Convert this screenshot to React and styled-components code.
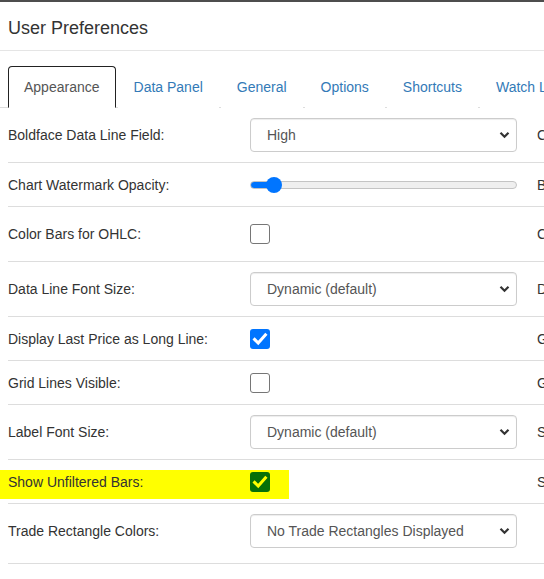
import styled, { createGlobalStyle } from 'styled-components';

const GlobalStyle = createGlobalStyle`
  html, body {
    margin: 0;
    padding: 0;
    background: #fff;
    overflow: hidden;
  }
  body {
    font-family: "Liberation Sans", Arial, sans-serif;
    font-size: 14px;
    line-height: 20px;
    color: #333;
  }
  * { box-sizing: border-box; }
`;

const tabs = ['Appearance', 'Data Panel', 'General', 'Options', 'Shortcuts', 'Watch List'];

const rows = [
  { label: 'Boldface Data Line Field:', kind: 'select', value: 'High', right: 'Crosshair Mode:', rightKind: 'select' },
  { label: 'Chart Watermark Opacity:', kind: 'slider', value: 6, right: 'Bar Spacing:', rightKind: 'check' },
  { label: 'Color Bars for OHLC:', kind: 'check', value: false, right: 'Chart Style:', rightKind: 'select' },
  { label: 'Data Line Font Size:', kind: 'select', value: 'Dynamic (default)', right: 'Default Chart Type:', rightKind: 'select' },
  { label: 'Display Last Price as Long Line:', kind: 'check', value: true, right: 'Gap Fill:', rightKind: 'check' },
  { label: 'Grid Lines Visible:', kind: 'check', value: false, right: 'Grid Line Color:', rightKind: 'check' },
  { label: 'Label Font Size:', kind: 'select', value: 'Dynamic (default)', right: 'Scale Type:', rightKind: 'select' },
  { label: 'Show Unfiltered Bars:', kind: 'check', value: true, marked: true, right: 'Show Volume:', rightKind: 'check' },
  { label: 'Trade Rectangle Colors:', kind: 'select', value: 'No Trade Rectangles Displayed', last: true },
];

const Page = styled.div`
  border-top: 2px solid #4d4d4d;
  width: 544px;
  overflow: hidden;
`;

const Header = styled.div`
  padding: 16px 8px 12px;
  border-bottom: 1px solid #e5e5e5;
`;

const Title = styled.h4`
  margin: 0;
  font-size: 18px;
  font-weight: normal;
  line-height: 20px;
  color: #333;
`;

const TabList = styled.ul`
  display: flex;
  list-style: none;
  margin: 15px 0 0;
  padding: 0 0 0 8px;
  border-bottom: 1px solid #ddd;
  white-space: nowrap;
`;

const Tab = styled.li`
  flex: none;
  margin: 0 2px -1px 0;
  padding: 10px 15px;
  line-height: 20px;
  border: 1px solid ${(p) => (p.$active ? '#222' : 'transparent')};
  border-bottom-color: transparent;
  border-radius: 4px 4px 0 0;
  background: #fff;
  color: ${(p) => (p.$active ? '#555' : '#337ab7')};
`;

const Form = styled.div`
  padding-left: 8px;
`;

const Row = styled.div`
  position: relative;
  display: grid;
  grid-template-columns: 242px 267px 280px 267px;
  grid-auto-rows: minmax(23px, auto);
  align-items: center;
  padding: 10px 0 ${(p) => (p.$last ? '15px' : '10px')};
  border-bottom: 1px solid #ddd;
`;

const Highlight = styled.span`
  position: absolute;
  left: -8px;
  top: 10px;
  width: 289px;
  height: 29px;
  background: #ffff00;
`;

const Label = styled.div`
  position: relative;
  white-space: nowrap;
  color: #333;
  padding-left: ${(p) => (p.$side ? '20px' : '0')};
`;

const Cell = styled.div`
  position: relative;
  display: flex;
  align-items: center;
`;

const SelectWrap = styled.div`
  position: relative;
  width: 267px;
  height: 34px;
`;

const Select = styled.select`
  -webkit-appearance: none;
  appearance: none;
  width: 100%;
  height: 100%;
  padding: 6px 30px 6px 16px;
  font-family: inherit;
  font-size: 14px;
  color: #555;
  background: #fff;
  border: 1px solid #ccc;
  border-radius: 4px;
  box-shadow: inset 0 1px 1px rgba(0, 0, 0, 0.075);
`;

const Chevron = styled.svg`
  position: absolute;
  right: 7px;
  top: 13px;
  pointer-events: none;
`;

const Range = styled.input`
  -webkit-appearance: none;
  appearance: none;
  width: 267px;
  height: 16px;
  margin: 0;
  background: transparent;

  &::-webkit-slider-runnable-track {
    height: 8px;
    border-radius: 4px;
    border: 1px solid #c4c4c4;
    background: linear-gradient(
      to right,
      #0075ff 0,
      #0075ff ${(p) => p.$pct}%,
      #efefef ${(p) => p.$pct}%,
      #efefef 100%
    );
  }
  &::-webkit-slider-thumb {
    -webkit-appearance: none;
    width: 16px;
    height: 16px;
    margin-top: -5px;
    border-radius: 50%;
    background: #0075ff;
    border: none;
  }
`;

const Box = styled.span`
  display: flex;
  align-items: center;
  justify-content: center;
  width: 20px;
  height: 20px;
  border-radius: 3px;
  border: ${(p) => (p.$checked ? 'none' : '1px solid #767676')};
  background: ${(p) => (p.$checked ? (p.$marked ? '#077007' : '#0075ff') : '#fff')};
`;

const CheckBox = ({ checked, marked }) => (
  <Box $checked={checked} $marked={marked}>
    {checked && (
      <svg width="20" height="20" viewBox="0 0 20 20">
        <path
          d="M4.6 10.4 L8.2 14 L15.4 5.8"
          fill="none"
          stroke={marked ? '#ffff00' : '#fff'}
          strokeWidth="3"
          strokeLinecap="square"
        />
      </svg>
    )}
  </Box>
);

const Control = ({ kind, value, marked }) => {
  if (kind === 'select')
    return (
      <SelectWrap>
        <Select defaultValue={value}>
          <option>{value}</option>
        </Select>
        <Chevron width="11" height="8" viewBox="0 0 11 8">
          <path d="M1.5 1.8 L5.5 5.8 L9.5 1.8" fill="none" stroke="#333" strokeWidth="2.2" />
        </Chevron>
      </SelectWrap>
    );
  if (kind === 'slider')
    return <Range type="range" min="0" max="100" defaultValue={value} $pct={value} />;
  if (kind === 'check') return <CheckBox checked={value} marked={marked} />;
  return null;
};

const App = () => (
  <>
    <GlobalStyle />
    <Page>
      <Header>
        <Title>User Preferences</Title>
      </Header>
      <TabList>
        {tabs.map((t, i) => (
          <Tab key={t} $active={i === 0}>{t}</Tab>
        ))}
      </TabList>
      <Form>
        {rows.map((r) => (
          <Row key={r.label} $last={r.last}>
            {r.marked && <Highlight />}
            <Label>{r.label}</Label>
            <Cell>
              <Control kind={r.kind} value={r.value} marked={r.marked} />
            </Cell>
            <Label $side>{r.right}</Label>
            <Cell>
              {r.rightKind && <Control kind={r.rightKind} value={r.rightKind === 'select' ? 'Default' : false} />}
            </Cell>
          </Row>
        ))}
      </Form>
    </Page>
  </>
);

export default App;
